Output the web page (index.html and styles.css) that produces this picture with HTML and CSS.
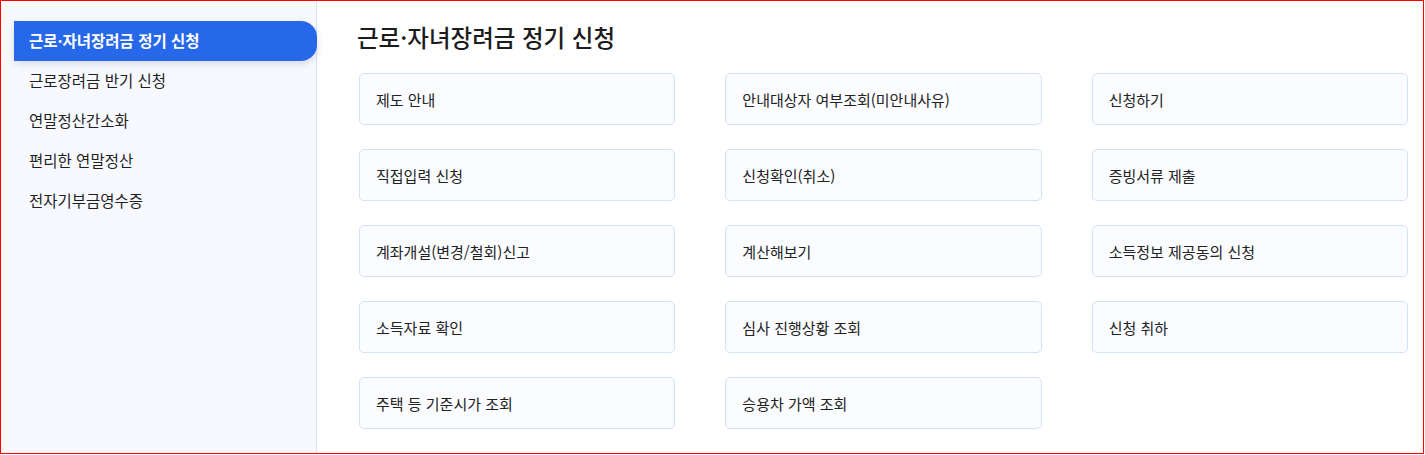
FILE: index.html
```html
<!DOCTYPE html>
<html lang="ko">
<head>
    <meta charset="UTF-8">
    <meta name="viewport" content="width=device-width, initial-scale=1.0">
    <title>근로·자녀장려금 정기 신청</title>
    <link rel="stylesheet" href="styles.css">
</head>
<body>
    <div class="page">
        <!-- Left menu -->
        <nav class="sidebar">
            <a class="menu-item active" href="#">근로·자녀장려금 정기 신청</a>
            <a class="menu-item" href="#">근로장려금 반기 신청</a>
            <a class="menu-item" href="#">연말정산간소화</a>
            <a class="menu-item" href="#">편리한 연말정산</a>
            <a class="menu-item" href="#">전자기부금영수증</a>
        </nav>

        <!-- Content -->
        <main class="content">
            <h1>근로·자녀장려금 정기 신청</h1>
            <div class="card-grid">
                <a class="card" href="#">제도 안내</a>
                <a class="card" href="#">안내대상자 여부조회(미안내사유)</a>
                <a class="card" href="#">신청하기</a>
                <a class="card" href="#">직접입력 신청</a>
                <a class="card" href="#">신청확인(취소)</a>
                <a class="card" href="#">증빙서류 제출</a>
                <a class="card" href="#">계좌개설(변경/철회)신고</a>
                <a class="card" href="#">계산해보기</a>
                <a class="card" href="#">소득정보 제공동의 신청</a>
                <a class="card" href="#">소득자료 확인</a>
                <a class="card" href="#">심사 진행상황 조회</a>
                <a class="card" href="#">신청 취하</a>
                <a class="card" href="#">주택 등 기준시가 조회</a>
                <a class="card" href="#">승용차 가액 조회</a>
            </div>
        </main>
    </div>
</body>
</html>
```

FILE: styles.css
```css
/* Global Styles */
body {
    font-family: 'Noto Sans CJK KR', 'Noto Sans', sans-serif;
    color: #222;
    margin: 0;
    padding: 0;
    background-color: #ffffff;
}

a {
    text-decoration: none;
    color: inherit;
}

.page {
    display: flex;
    width: 1424px;
    height: 454px;
    box-sizing: border-box;
    border: 1px solid #ff0000;
}

/* Sidebar */
.sidebar {
    width: 316px;
    flex-shrink: 0;
    padding: 20px 0 0 13px;
    box-sizing: border-box;
    background-color: #f7f9fe;
    border-right: 1px solid #d4e2fb;
    display: flex;
    flex-direction: column;
}

.menu-item {
    height: 40px;
    display: flex;
    align-items: center;
    padding-left: 15px;
    padding-bottom: 2px;
    box-sizing: border-box;
    font-size: 15.5px;
    color: #1f1f1f;
    margin-right: -1px;
}

.menu-item.active {
    background-color: #2767ea;
    color: #ffffff;
    font-weight: 700;
    border-radius: 0 16px 16px 0;
    box-shadow: 0 3px 8px rgba(0, 0, 0, 0.12);
    position: relative;
    z-index: 1;
}

/* Content */
.content {
    flex: 1;
    padding: 20px 15px 0 42px;
}

h1 {
    font-size: 23.5px;
    font-weight: 500;
    color: #1c1c1c;
    margin: 0 0 20px -2px;
    line-height: 32px;
}

.card-grid {
    display: grid;
    grid-template-columns: repeat(3, 1fr);
    column-gap: 50px;
    row-gap: 24px;
}

.card {
    height: 52px;
    box-sizing: border-box;
    display: flex;
    align-items: center;
    padding-left: 16px;
    font-size: 15px;
    background-color: #fafcff;
    border: 1px solid #d3e2fa;
    border-radius: 5px;
}
```
